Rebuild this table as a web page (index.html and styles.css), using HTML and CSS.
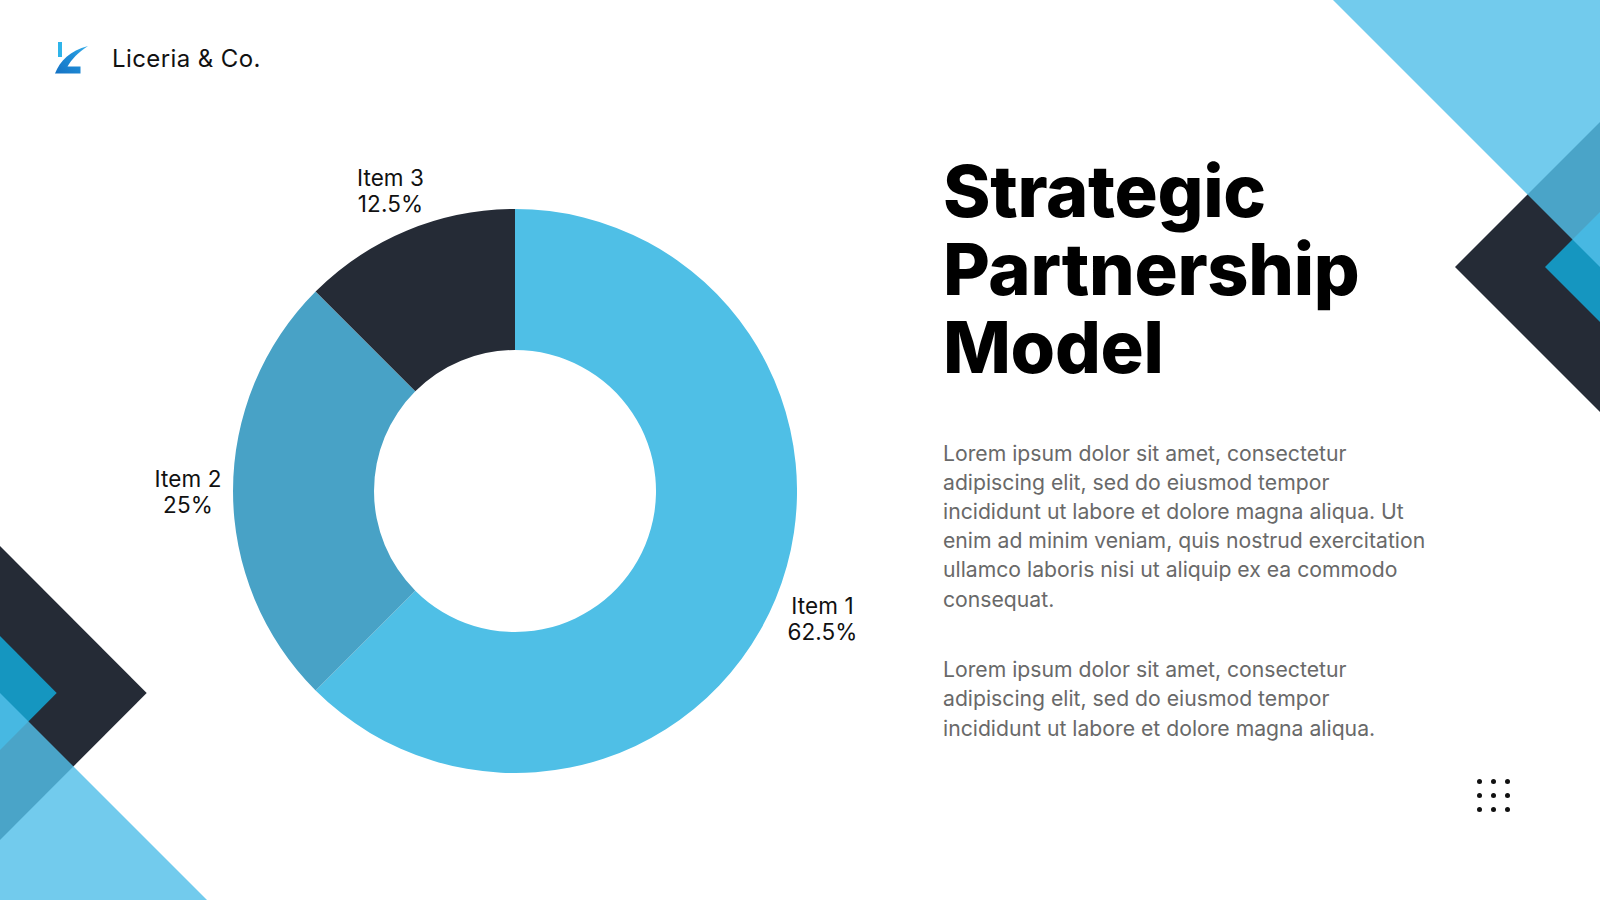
FILE: index.html
```html
<!DOCTYPE html>
<html lang="en">
<head>
<meta charset="utf-8">
<title>Strategic Partnership Model</title>
<link rel="stylesheet" href="styles.css">
</head>
<body>
<div class="slide">
  <svg class="deco deco-tr" viewBox="1330 0 270 415" width="270" height="415" aria-hidden="true">
    <polygon class="d-dark" points="1455,267 1600,122 1600,412"/>
    <polygon class="d-teal" points="1545,267 1600,212 1600,322"/>
    <polygon class="d-light" points="1333,0 1600,0 1600,267"/>
  </svg>
  <svg class="deco deco-bl" viewBox="0 540 210 360" width="210" height="360" aria-hidden="true">
    <polygon class="d-dark" points="0,546 146.7,693 0,840"/>
    <polygon class="d-teal" points="0,636 56.7,693 0,750"/>
    <polygon class="d-light" points="0,693 0,900 207,900"/>
  </svg>

  <header class="brand">
    <svg class="brand-logo" viewBox="0 0 36 32" width="36" height="32" aria-hidden="true">
      <defs>
        <linearGradient id="lg" x1="0" y1="1" x2="1" y2="0">
          <stop offset="0" stop-color="#1572c4"/>
          <stop offset="0.6" stop-color="#1f8fd8"/>
          <stop offset="1" stop-color="#37ade8"/>
        </linearGradient>
      </defs>
      <rect x="6" y="0" width="4" height="15" fill="#2fb4ea"/>
      <path d="M3 31.5 C 8 19, 18 8.5, 36 4 C 26 10.5, 19.5 17.5, 15.5 24.5 L 28.5 24.5 L 28.5 31.5 Z" fill="url(#lg)"/>
    </svg>
    <span class="brand-name">Liceria &amp; Co.</span>
  </header>

  <main class="content">
    <section class="chart">
      <div class="donut">
        <svg viewBox="0 0 564 564" width="564" height="564" aria-hidden="true">
          <path class="seg seg1" d="M282 0 A282 282 0 1 1 82.6 481.4 L182.3 381.7 A141 141 0 1 0 282 141 Z"/>
          <path class="seg seg2" d="M82.6 481.4 A282 282 0 0 1 82.6 82.6 L182.3 182.3 A141 141 0 0 0 182.3 381.7 Z"/>
          <path class="seg seg3" d="M82.6 82.6 A282 282 0 0 1 282 0 L282 141 A141 141 0 0 0 182.3 182.3 Z"/>
        </svg>
        <div class="label label-3">Item 3<br>12.5%</div>
        <div class="label label-2">Item 2<br>25%</div>
        <div class="label label-1">Item 1<br>62.5%</div>
      </div>
    </section>

    <section class="text">
      <h1 class="title">Strategic<br>Partnership<br>Model</h1>
      <p class="body">Lorem ipsum dolor sit amet, consectetur adipiscing elit, sed do eiusmod tempor incididunt ut labore et dolore magna aliqua. Ut enim ad minim veniam, quis nostrud exercitation ullamco laboris nisi ut aliquip ex ea commodo consequat.</p>
      <p class="body">Lorem ipsum dolor sit amet, consectetur adipiscing elit, sed do eiusmod tempor incididunt ut labore et dolore magna aliqua.</p>
    </section>
  </main>

  <div class="dots" aria-hidden="true">
    <span></span><span></span><span></span>
    <span></span><span></span><span></span>
    <span></span><span></span><span></span>
  </div>
</div>
</body>
</html>
```

FILE: styles.css
```css
* { box-sizing: border-box; }

html, body {
  margin: 0;
  padding: 0;
  background: #ffffff;
}

body {
  font-family: Inter, "Noto Sans", "Liberation Sans", sans-serif;
  color: #111111;
}

.slide {
  position: relative;
  width: 1600px;
  height: 900px;
  overflow: hidden;
  background: #ffffff;
}

/* corner decorations */
.deco {
  position: absolute;
  display: block;
}
.deco-tr { top: 0; right: 0; }
.deco-bl { left: 0; bottom: 0; }

.d-dark { fill: #252b36; }
.d-teal { fill: #1596c0; }
.d-light { fill: #53c0e9; fill-opacity: 0.82; }

/* brand */
.brand {
  display: flex;
  align-items: center;
  gap: 24px;
  height: 32px;
  margin: 42px 0 0 52px;
}
.brand-logo { display: block; flex: none; }
.brand-name {
  font-size: 24px;
  font-weight: 400;
  color: #111111;
  letter-spacing: 0.4px;
}

/* content */
.content {
  display: flex;
  align-items: flex-start;
}

.chart {
  flex: none;
  width: 943px;
  padding-left: 233px;
  padding-top: 135px;
}

.donut {
  position: relative;
  width: 564px;
  height: 564px;
}
.donut svg { display: block; }

.seg1 { fill: #4fbfe6; }
.seg2 { fill: #48a2c6; }
.seg3 { fill: #252b36; }

.label {
  position: absolute;
  transform: translateX(-50%);
  text-align: center;
  font-size: 22.5px;
  line-height: 26px;
  letter-spacing: 0.1px;
  color: #111111;
  white-space: nowrap;
}
.label-3 { left: 157.5px; top: -44.5px; }
.label-2 { left: -45px; top: 256.5px; }
.label-1 { left: 589.5px; top: 383.5px; }

.text {
  flex: none;
  width: 500px;
  padding-top: 77.5px;
}

.title {
  margin: 0;
  font-size: 72px;
  line-height: 78px;
  font-weight: 800;
  color: #000000;
  letter-spacing: -0.3px;
}

.body {
  margin: 0;
  width: 484px;
  font-size: 21.2px;
  line-height: 29.2px;
  color: #696969;
}
.title + .body { margin-top: 53px; }
.body + .body { margin-top: 41.5px; }

/* dot grid */
.dots {
  position: absolute;
  left: 1476.5px;
  top: 778.5px;
  display: grid;
  grid-template-columns: repeat(3, 5px);
  grid-auto-rows: 5px;
  gap: 9.3px;
}
.dots span {
  display: block;
  width: 5px;
  height: 5px;
  border-radius: 50%;
  background: #111111;
}
```
